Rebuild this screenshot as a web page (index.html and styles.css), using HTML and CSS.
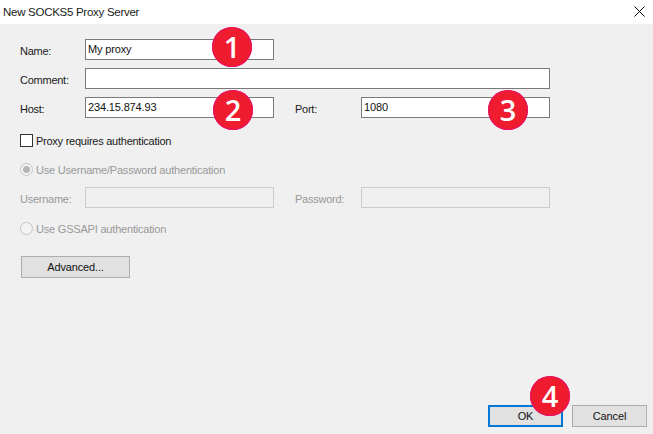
FILE: index.html
```html
<html>
<head>
    <title>New SOCKS5 Proxy Server</title>
    <link rel="stylesheet" href="styles.css">
</head>
<body>
    <div class="dialog">
        <div class="titlebar">
            <span class="title">New SOCKS5 Proxy Server</span>
            <svg class="close" width="11" height="11" viewBox="0 0 11 11">
                <path d="M0.5 0.5L10.5 10.5M10.5 0.5L0.5 10.5" stroke="#000" stroke-width="1" fill="none"/>
            </svg>
        </div>
        <div class="content">
            <div class="form-grid">
                <label>Name:</label>
                <div class="field-wrap">
                    <input class="field" value="My proxy">
                    <span class="badge badge-name">1</span>
                </div>
                <div class="spacer"></div>

                <label>Comment:</label>
                <input class="field wide" value="">

                <label>Host:</label>
                <div class="field-wrap">
                    <input class="field" value="234.15.874.93">
                    <span class="badge badge-host">2</span>
                </div>
                <label class="port-label">Port:</label>
                <div class="field-wrap">
                    <input class="field" value="1080">
                    <span class="badge badge-port">3</span>
                </div>
            </div>

            <div class="check-row">
                <span class="checkbox"></span>
                <span>Proxy requires authentication</span>
            </div>

            <div class="radio-row disabled">
                <span class="radio selected"></span>
                <span>Use Username/Password authentication</span>
            </div>

            <div class="form-grid credentials disabled">
                <label>Username:</label>
                <input class="field" disabled>
                <label class="port-label">Password:</label>
                <input class="field" disabled>
            </div>

            <div class="radio-row gssapi disabled">
                <span class="radio"></span>
                <span>Use GSSAPI authentication</span>
            </div>

            <button class="btn advanced">Advanced...</button>
        </div>
        <div class="footer">
            <div class="field-wrap">
                <button class="btn default">OK</button>
                <span class="badge badge-ok">4</span>
            </div>
            <button class="btn">Cancel</button>
        </div>
    </div>
</body>
</html>
```

FILE: styles.css
```css
body {
    margin: 0;
    background-color: #f0f0f0;
    font-family: "Liberation Sans", Arial, sans-serif;
    font-size: 11px;
    letter-spacing: -0.25px;
    color: #1a1a1a;
}
.dialog {
    display: flex;
    flex-direction: column;
    width: 653px;
    height: 434px;
    overflow: hidden;
}
.titlebar {
    display: flex;
    justify-content: space-between;
    align-items: center;
    height: 24px;
    padding: 0 8px 1px 3px;
    box-sizing: border-box;
    background-color: #fff;
}
.title {
    font-size: 11.5px;
    letter-spacing: -0.28px;
}
.close {
    display: block;
}
.content {
    flex: 1;
    padding: 15px 0 0 20px;
}
.form-grid {
    display: grid;
    grid-template-columns: 65px 189px 87px 189px;
    grid-auto-rows: 21px;
    row-gap: 8px;
    align-items: center;
}
.form-grid label {
    padding-top: 2px;
}
.form-grid .port-label {
    padding-left: 21px;
}
.spacer {
    grid-column: 3 / 5;
}
.field-wrap {
    position: relative;
    height: 21px;
}
.field {
    display: block;
    width: 100%;
    height: 21px;
    padding: 0 2px 2px;
    box-sizing: border-box;
    border: 1px solid #7a7a7a;
    border-radius: 0;
    outline: none;
    background-color: #fff;
    font-family: inherit;
    font-size: 11px;
    letter-spacing: -0.15px;
    color: #111;
}
.wide {
    grid-column: 2 / 5;
}
.field:disabled {
    border-color: #cccccc;
    background-color: #f0f0f0;
}
.check-row, .radio-row {
    display: flex;
    align-items: center;
    gap: 3px;
    height: 13px;
}
.check-row {
    margin-top: 16px;
}
.radio-row {
    margin-top: 16px;
    letter-spacing: -0.2px;
}
.radio-row.gssapi {
    margin-top: 14px;
}
.disabled {
    color: #999;
}
.credentials {
    margin-top: 11px;
}
.checkbox {
    width: 13px;
    height: 13px;
    box-sizing: border-box;
    border: 1px solid #333;
    background-color: #fff;
}
.radio {
    position: relative;
    width: 13px;
    height: 13px;
    box-sizing: border-box;
    border: 1px solid #c4c4c4;
    border-radius: 50%;
    background-color: #f4f4f4;
}
.radio.selected::after {
    content: "";
    position: absolute;
    left: 2px;
    top: 2px;
    width: 7px;
    height: 7px;
    border-radius: 50%;
    background-color: #b5b5b5;
}
.btn {
    display: block;
    width: 75px;
    height: 22px;
    padding: 0;
    box-sizing: border-box;
    border: 1px solid #adadad;
    border-radius: 0;
    background-color: #e1e1e1;
    font-family: inherit;
    font-size: 11px;
    letter-spacing: -0.15px;
    color: #111;
}
.btn.advanced {
    width: 109px;
    margin: 21px 0 0 1px;
}
.btn.default {
    border: 2px solid #0078d7;
}
.footer {
    display: flex;
    justify-content: flex-end;
    gap: 9px;
    padding: 0 6px 7px 0;
}
/* Numbered callouts painted over the form */
.badge {
    position: absolute;
    width: 40px;
    height: 40px;
    border-radius: 50%;
    background-color: #ee1c2e;
    box-shadow: 0 0 0 1px #e8106a inset;
    color: #fff;
    font-family: "Open Sans", sans-serif;
    font-size: 29px;
    font-weight: 600;
    line-height: 40px;
    letter-spacing: 0;
    text-align: center;
}
.badge-name {
    left: 127px;
    top: -12px;
}
.badge-host {
    left: 128px;
    top: -7px;
}
.badge-port {
    left: 127px;
    top: -7px;
}
.badge-ok {
    left: 42px;
    top: -29px;
}
```
